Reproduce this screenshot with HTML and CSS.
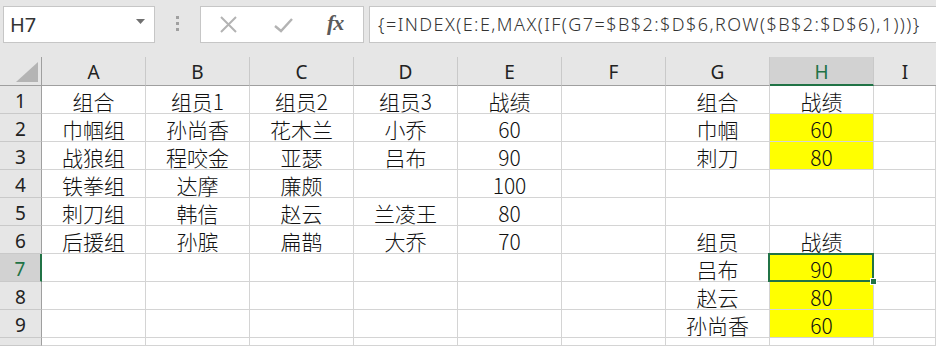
FILE: index.html
```html
<!DOCTYPE html>
<html lang="zh">
<head>
<meta charset="utf-8">
<link rel="stylesheet" href="styles.css">
</head>
<body>
<div class="toolbar">
  <div class="namebox"><span class="ref">H7</span>
    <svg class="dd" width="9" height="5" viewBox="0 0 9 5"><path d="M0 0H9L4.5 5Z" fill="#707070"/></svg>
  </div>
  <div class="sep"><i></i><i></i><i></i></div>
  <div class="btns">
    <svg class="xi" width="17" height="17" viewBox="0 0 17 17"><path d="M1 1L16 16M16 1L1 16" stroke="#b3b3b3" stroke-width="2"/></svg>
    <svg class="ck" width="19" height="15" viewBox="0 0 19 15"><path d="M1 8L7 13L18 1" stroke="#b3b3b3" stroke-width="2.4" fill="none"/></svg>
    <span class="fx">fx</span>
  </div>
  <div class="formula">{=INDEX(E:E,MAX(IF(G7=$B$2:$D$6,ROW($B$2:$D$6),1)))}</div>
</div>
<div class="sheet">
  <div class="corner"><svg width="22" height="20" viewBox="0 0 22 20"><path d="M22 0V20H0Z" fill="#b4b4b4"/></svg></div>
  <div class="ch">A</div><div class="ch">B</div><div class="ch">C</div><div class="ch">D</div><div class="ch">E</div><div class="ch">F</div><div class="ch">G</div><div class="ch sel">H</div><div class="ch last">I</div>

  <div class="rh">1</div><div class="c">组合</div><div class="c">组员1</div><div class="c">组员2</div><div class="c">组员3</div><div class="c">战绩</div><div class="c"></div><div class="c">组合</div><div class="c">战绩</div><div class="c"></div>
  <div class="rh">2</div><div class="c">巾帼组</div><div class="c">孙尚香</div><div class="c">花木兰</div><div class="c">小乔</div><div class="c">60</div><div class="c"></div><div class="c">巾帼</div><div class="c y">60</div><div class="c"></div>
  <div class="rh">3</div><div class="c">战狼组</div><div class="c">程咬金</div><div class="c">亚瑟</div><div class="c">吕布</div><div class="c">90</div><div class="c"></div><div class="c">刺刀</div><div class="c y">80</div><div class="c"></div>
  <div class="rh">4</div><div class="c">铁拳组</div><div class="c">达摩</div><div class="c">廉颇</div><div class="c"></div><div class="c">100</div><div class="c"></div><div class="c"></div><div class="c"></div><div class="c"></div>
  <div class="rh">5</div><div class="c">刺刀组</div><div class="c">韩信</div><div class="c">赵云</div><div class="c">兰凌王</div><div class="c">80</div><div class="c"></div><div class="c"></div><div class="c"></div><div class="c"></div>
  <div class="rh">6</div><div class="c">后援组</div><div class="c">孙膑</div><div class="c">扁鹊</div><div class="c">大乔</div><div class="c">70</div><div class="c"></div><div class="c">组员</div><div class="c">战绩</div><div class="c"></div>
  <div class="rh sel">7</div><div class="c"></div><div class="c"></div><div class="c"></div><div class="c"></div><div class="c"></div><div class="c"></div><div class="c">吕布</div><div class="c y active">90<span class="cursor"></span><span class="handle"></span></div><div class="c"></div>
  <div class="rh">8</div><div class="c"></div><div class="c"></div><div class="c"></div><div class="c"></div><div class="c"></div><div class="c"></div><div class="c">赵云</div><div class="c y">80</div><div class="c"></div>
  <div class="rh">9</div><div class="c"></div><div class="c"></div><div class="c"></div><div class="c"></div><div class="c"></div><div class="c"></div><div class="c">孙尚香</div><div class="c y">60</div><div class="c"></div>
  <div class="rh"></div><div class="c"></div><div class="c"></div><div class="c"></div><div class="c"></div><div class="c"></div><div class="c"></div><div class="c"></div><div class="c"></div><div class="c"></div>
</div>
</body>
</html>
```
FILE: styles.css
```css
html, body {
  margin: 0;
  padding: 0;
  width: 936px;
  height: 346px;
  overflow: hidden;
  background: #ffffff;
  font-family: "Noto Sans CJK SC", "Noto Sans", sans-serif;
}
.toolbar {
  display: flex;
  align-items: flex-start;
  height: 57px;
  box-sizing: border-box;
  padding: 6px 0 0 3px;
  background: #e6e6e6;
  overflow: hidden;
}
.namebox {
  width: 152px;
  height: 37px;
  box-sizing: border-box;
  background: #fff;
  border: 1px solid #c6c6c6;
  display: flex;
  align-items: center;
  justify-content: space-between;
  padding: 0 9px 0 6px;
}
.ref {
  font-family: "Noto Sans", sans-serif;
  font-size: 20px;
  color: #333;
  line-height: 1;
}
.dd { margin-top: -6px; }
.sep {
  width: 45px;
  display: flex;
  flex-direction: column;
  align-items: center;
  gap: 3px;
  padding-top: 10px;
}
.sep i {
  display: block;
  width: 3px;
  height: 3px;
  background: #a0a0a0;
}
.btns {
  width: 164px;
  height: 37px;
  box-sizing: border-box;
  background: #fff;
  border: 1px solid #c6c6c6;
  display: flex;
  align-items: center;
  padding: 0 0 0 19px;
}
.xi { margin-right: 37px; }
.ck { margin-right: 34px; margin-top: 2px; }
.fx {
  font-family: "Liberation Serif", "DejaVu Serif", serif;
  font-style: italic;
  font-weight: bold;
  font-size: 22px;
  color: #5a5a5a;
  margin-top: -4px;
  letter-spacing: -1px;
}
.formula {
  margin-left: 5px;
  flex: 1;
  height: 37px;
  box-sizing: border-box;
  background: #fff;
  border: 1px solid #c6c6c6;
  border-right: none;
  font-family: "Noto Sans", sans-serif;
  font-weight: 300;
  font-size: 18px;
  letter-spacing: 1.45px;
  color: #333;
  padding-left: 8px;
  line-height: 34px;
  white-space: nowrap;
  overflow: hidden;
}
.sheet {
  display: grid;
  grid-template-columns: 42px repeat(8, 104px) 1fr;
  grid-template-rows: 29px repeat(9, 28px) 1fr;
  height: 289px;
}
.sheet > div {
  box-sizing: border-box;
}
.corner {
  background: #e6e6e6;
  border-right: 1px solid #9f9f9f;
  border-bottom: 1px solid #9f9f9f;
  display: flex;
  align-items: flex-end;
  justify-content: flex-end;
  padding: 0 3px 3px 0;
}
.ch {
  background: #e6e6e6;
  border-right: 1px solid #c9c9c9;
  border-bottom: 1px solid #9f9f9f;
  font-family: "Noto Sans", sans-serif;
  font-size: 19px;
  color: #222;
  text-align: center;
  line-height: 30px;
}
.ch.sel {
  background: #d2d2d2;
  color: #217346;
  border-bottom: 2px solid #217346;
}
.ch.last { border-right: none; }
.rh {
  background: #e6e6e6;
  border-right: 1px solid #9f9f9f;
  border-bottom: 1px solid #c9c9c9;
  font-family: "Noto Sans", sans-serif;
  font-size: 19px;
  color: #222;
  text-align: center;
  line-height: 30px;
}
.rh.sel {
  background: #d2d2d2;
  color: #217346;
  border-right: 2px solid #217346;
}
.c {
  border-right: 1px solid #d4d4d4;
  border-bottom: 1px solid #d4d4d4;
  text-align: center;
  font-size: 21px;
  font-weight: 300;
  line-height: 30px;
  color: #111;
  white-space: nowrap;
}
.c.y { background: #ffff00; }
.c.active { position: relative; }
.cursor {
  position: absolute;
  left: -2px;
  top: -1px;
  right: -1px;
  bottom: -1px;
  border: 2px solid #217346;
}
.handle {
  position: absolute;
  right: -4px;
  bottom: -4px;
  width: 7px;
  height: 7px;
  background: #217346;
  border: 1px solid #fff;
  box-sizing: border-box;
}
```
